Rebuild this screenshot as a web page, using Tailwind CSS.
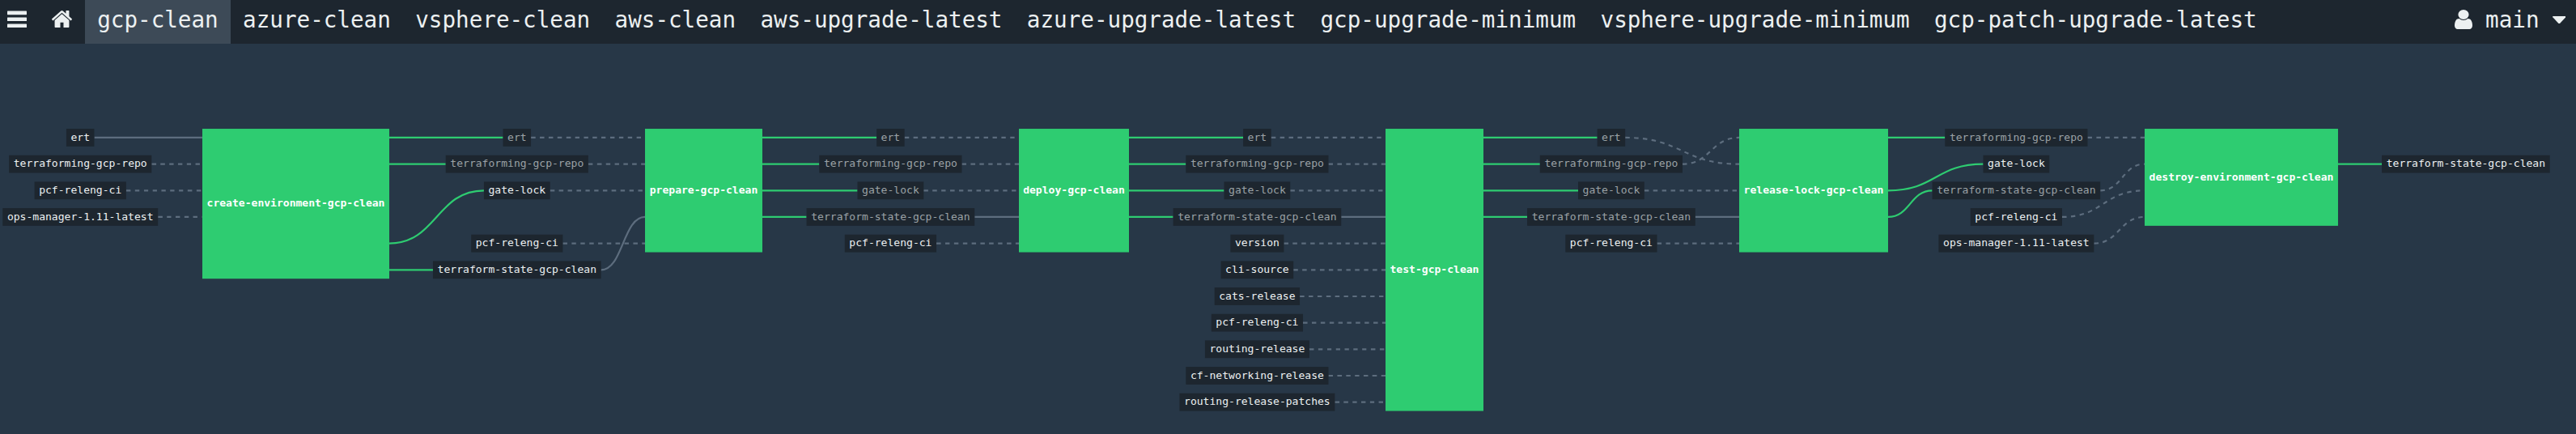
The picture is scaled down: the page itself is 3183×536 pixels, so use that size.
<!DOCTYPE html>
<html lang="en">
<head>
<meta charset="utf-8">
<title>gcp-clean</title>
<script src="https://cdn.jsdelivr.net/npm/@tailwindcss/browser@4"></script>
</head>
<body class="h-[536px] overflow-hidden bg-[#273747] font-['DejaVu_Sans_Mono',monospace] text-[#ecf0f1] flex flex-col">
<nav class="flex h-[54.4px] shrink-0 bg-[#1d262f] text-[27.6px] leading-[49px]">
  <div class="flex w-[105px] shrink-0 pl-[9px]">
    <svg class="mt-[13px] h-[21px] w-6 fill-[#ecf0f1]" viewBox="0 0 24 21"><rect y=".6" width="24" height="4.6" rx=".6"/><rect y="8.5" width="24" height="4.6" rx=".6"/><rect y="16.4" width="24" height="4.6" rx=".6"/></svg>
    <svg class="mt-[13px] ml-[31px] h-[21px] w-[25px] fill-[#ecf0f1]" preserveAspectRatio="none" viewBox="89 250 1614 1286"><path d="M1472 992v480q0 26-19 45t-45 19h-384v-384h-256v384h-384q-26 0-45-19t-19-45v-480q0-1 .5-3t.5-3l575-474 575 474q1 2 1 6zm223-69l-62 74q-8 9-21 11h-3q-13 0-21-7l-692-577-692 577q-12 8-24 7-13-2-21-11l-62-74q-8-10-7-23.5t11-21.5l719-599q32-26 76-26t76 26l244 204v-195q0-14 9-23t23-9h192q14 0 23 9t9 23v408l219 182q10 8 11 21.5t-7 23.5z"/></svg>
  </div>
  <a class="bg-[#3d4a57] px-[15.2px]">gcp-clean</a>
  <a class="px-[15.2px]">azure-clean</a>
  <a class="px-[15.2px]">vsphere-clean</a>
  <a class="px-[15.2px]">aws-clean</a>
  <a class="px-[15.2px]">aws-upgrade-latest</a>
  <a class="px-[15.2px]">azure-upgrade-latest</a>
  <a class="px-[15.2px]">gcp-upgrade-minimum</a>
  <a class="px-[15.2px]">vsphere-upgrade-minimum</a>
  <a class="px-[15.2px]">gcp-patch-upgrade-latest</a>
  <div class="ml-auto flex pr-[13px]">
    <svg class="mt-3 mr-[16px] h-6 w-[22px] fill-[#ecf0f1]" preserveAspectRatio="none" viewBox="256 128 1280 1536"><path d="M1536 1399q0 109-62.5 187t-150.5 78h-854q-88 0-150.5-78t-62.5-187q0-85 8.5-160.5t31.5-152 58.5-131 94-89 134.5-34.5q131 128 313 128t313-128q76 0 134.5 34.5t94 89 58.5 131 31.5 152 8.5 160.5zm-256-887q0 159-112.5 271.5t-271.5 112.5-271.5-112.5-112.5-271.5 112.5-271.5 271.5-112.5 271.5 112.5 112.5 271.5z"/></svg>
    <span>main</span>
    <svg class="mt-[19.5px] ml-[16px] h-[9.5px] w-[16.5px] fill-[#ecf0f1]" viewBox="0 0 16.5 9.5"><path d="M.7 0H15.8Q16.8 .5 16.2 1.2L8.9 9.1Q8.25 9.7 7.6 9.1L.3 1.2Q-.3 .5 .7 0Z"/></svg>
  </div>
</nav>
<svg id="graph" class="block h-[481.6px] w-full shrink-0 text-[13.07px]" viewBox="0 54.4 3183 481.6"></svg>
<script>
// Rows are spaced evenly; a row's y is where its edges run.
const rowY = r => 170.35 + 32.67 * r;
const CHAR = 7.87, PAD = 5.45, HALF = 10.9;

// [name, left, right, last row covered]
const jobs = [
  ['create-environment-gcp-clean', 250, 481, 5],
  ['prepare-gcp-clean', 797, 942, 4],
  ['deploy-gcp-clean', 1259, 1395, 4],
  ['test-gcp-clean', 1712, 1833, 10],
  ['release-lock-gcp-clean', 2149, 2333, 4],
  ['destroy-environment-gcp-clean', 2650, 2889, 3]
];
// One column of resources before each job, and one after the last.
// [name, row, row it leaves the previous job at (null: none), row it enters the next job at, solid edge, dimmed]
const T = 'terraforming-gcp-repo', S = 'terraform-state-gcp-clean';
const columns = [
  [99.2, [['ert',0,null,0,1,0],[T,1,null,1,0,0],['pcf-releng-ci',2,null,2,0,0],['ops-manager-1.11-latest',3,null,3,0,0]]],
  [638.8, [['ert',0,0,0,0,1],[T,1,1,1,0,1],['gate-lock',2,4,2,0,0],['pcf-releng-ci',4,null,4,0,0],[S,5,5,3,1,0]]],
  [1100.4, [['ert',0,0,0,0,1],[T,1,1,1,0,1],['gate-lock',2,2,2,0,1],[S,3,3,3,1,1],['pcf-releng-ci',4,null,4,0,0]]],
  [1553.4, [['ert',0,0,0,0,1],[T,1,1,1,0,1],['gate-lock',2,2,2,0,1],[S,3,3,3,1,1],['version',4,null,4,0,0],['cli-source',5,null,5,0,0],['cats-release',6,null,6,0,0],['pcf-releng-ci',7,null,7,0,0],['routing-release',8,null,8,0,0],['cf-networking-release',9,null,9,0,0],['routing-release-patches',10,null,10,0,0]]],
  [1990.9, [['ert',0,0,1,0,1],[T,1,1,0,0,1],['gate-lock',2,2,2,0,1],[S,3,3,3,1,1],['pcf-releng-ci',4,null,4,0,0]]],
  [2491.4, [[T,0,0,0,0,1],['gate-lock',1,2,null,0,0],[S,2,3,1,0,1],['pcf-releng-ci',3,null,2,0,0],['ops-manager-1.11-latest',4,null,3,0,0]]],
  [3046.9, [[S,1,1,null,0,0]]]
];
const edge = (x1, r1, x2, r2, cls) => {
  const m = (x1 + x2) / 2, a = rowY(r1), b = rowY(r2);
  return `<path class="${cls}" d="M${x1} ${a}C${m} ${a} ${m} ${b} ${x2} ${b}"/>`;
};
let edges = '', nodes = '';
jobs.forEach(([name, l, r, last]) => {
  const top = rowY(0) - HALF, h = rowY(last) + HALF - top;
  nodes += `<rect class="fill-[#2ecc71]" x="${l}" y="${top}" width="${r - l}" height="${h}"/>` +
    `<text class="fill-white font-bold" text-anchor="middle" x="${(l + r) / 2}" y="${top + h / 2 + 3.7}">${name}</text>`;
});
columns.forEach(([cx, items], i) => {
  items.forEach(([name, row, from, to, solid, dim]) => {
    const half = name.length * CHAR / 2 + PAD, y = rowY(row);
    if (from !== null) edges += edge(jobs[i - 1][2], from, cx - half, row, 'fill-none stroke-[#2ecc71] stroke-[2.18px]');
    if (to !== null) edges += edge(cx + half, row, jobs[i][1], to, solid
      ? 'fill-none stroke-[#5d6d7e] stroke-[2.18px]'
      : 'fill-none stroke-[#5d6d7e] stroke-[2.18px] [stroke-dasharray:5.445]');
    nodes += `<rect class="fill-[#1d262f]" x="${cx - half}" y="${y - HALF}" width="${half * 2}" height="${HALF * 2}"/>` +
      `<text class="${dim ? 'fill-[#9aa1a5]' : 'fill-[#ecf0f1]'}" text-anchor="middle" x="${cx}" y="${y + 3.7}">${name}</text>`;
  });
});
document.getElementById('graph').innerHTML = edges + nodes;
</script>
</body>
</html>
